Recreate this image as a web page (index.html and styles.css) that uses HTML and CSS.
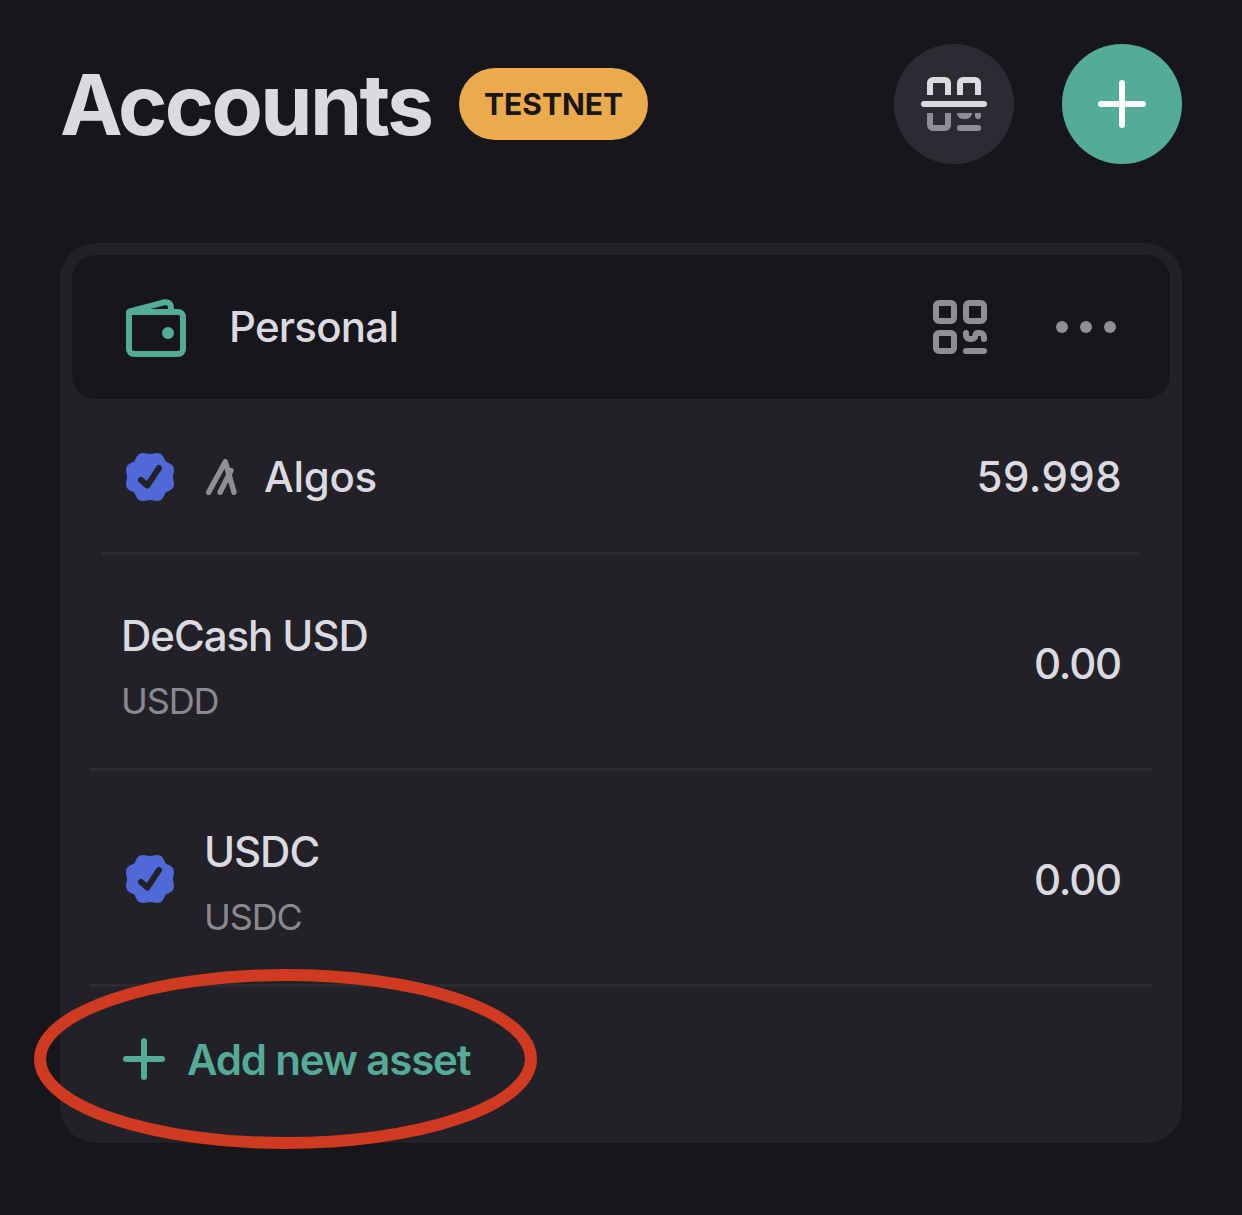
FILE: index.html
```html
<!DOCTYPE html>
<html lang="en">
<head>
<meta charset="utf-8">
<title>Accounts</title>
<link rel="stylesheet" href="styles.css">
</head>
<body>
<svg class="defs" aria-hidden="true">
  <symbol id="verified" viewBox="0 0 48 48">
    <path fill="#5069d8" d="M24 1C27 1 28 0 31 0C35.5 0 37 3 38.5 6C39.5 8.5 39.5 8.5 42 9.5C45 11 48 12.5 48 17C48 20 47 21 47 24C47 27 48 28 48 31C48 35.5 45 37 42 38.5C39.5 39.5 39.5 39.5 38.5 42C37 45 35.5 48 31 48C28 48 27 47 24 47C21 47 20 48 17 48C12.5 48 11 45 9.5 42C8.5 39.5 8.5 39.5 6 38.5C3 37 0 35.5 0 31C0 28 1 27 1 24C1 21 0 20 0 17C0 12.5 3 11 6 9.5C8.5 8.5 8.5 8.5 9.5 6C11 3 12.5 0 17 0C20 0 21 1 24 1Z"/>
    <path fill="none" stroke="#222127" stroke-width="6" stroke-linecap="round" stroke-linejoin="round" d="M15 27L21.3 32.6L33 15"/>
  </symbol>
</svg>
<main class="screen">
  <header class="topbar">
    <h1 class="title">Accounts</h1>
    <span class="badge"><span class="badge-text">TESTNET</span></span>
    <div class="actions">
      <button class="round scan" aria-label="Scan QR">
        <svg width="120" height="120" viewBox="0 0 120 120" fill="none" stroke-width="6">
          <path stroke="#dbdae0" d="M36 51V39a3 3 0 0 1 3-3h12a3 3 0 0 1 3 3v12M66 51V39a3 3 0 0 1 3-3h12a3 3 0 0 1 3 3v12"/>
          <path stroke="#dbdae0" stroke-linecap="round" d="M30 60h60"/>
          <path stroke="#8f8e98" d="M36 69v12a3 3 0 0 0 3 3h12a3 3 0 0 0 3-3V69"/>
          <path stroke="#8f8e98" stroke-linecap="round" d="M66 84h18"/>
          <path fill="#8f8e98" d="M63 69h15a6 6 0 0 1-6 6h-3a6 6 0 0 1-6-6zM81 69h6v3a3 3 0 0 1-6 0z"/>
        </svg>
      </button>
      <button class="round add" aria-label="Add account">
        <svg width="48" height="48" viewBox="0 0 48 48" stroke="#fff" stroke-width="6" stroke-linecap="round"><path d="M24 3v42M3 24h42"/></svg>
      </button>
    </div>
  </header>

  <section class="card">
    <div class="account">
      <svg class="wallet" width="60" height="58" viewBox="0 0 60 58" fill="none" stroke="#53ab98" stroke-width="6" stroke-linejoin="round">
        <path d="M3 13H52a5 5 0 0 1 5 5V50a5 5 0 0 1-5 5H8a5 5 0 0 1-5-5Z"/>
        <path d="M3 12.6L38 3.3Q45 2.3 45 9.5V12"/>
        <circle cx="42" cy="34" r="6" fill="#53ab98" stroke="none"/>
      </svg>
      <span class="name personal">Personal</span>
      <svg class="qr" width="54" height="54" viewBox="0 0 54 54" fill="none" stroke="#8f8e96" stroke-width="6">
        <rect x="3" y="3" width="18" height="18" rx="3"/>
        <rect x="33" y="3" width="18" height="18" rx="3"/>
        <rect x="3" y="33" width="18" height="18" rx="3"/>
        <path stroke-linecap="round" d="M33 33v2a4 4 0 0 0 4 4h1.5a4 4 0 0 0 4-4a2 2 0 0 1 2-2h2.5a4 4 0 0 1 4 4v2M33 51h18"/>
      </svg>
      <svg class="more" width="60" height="12" viewBox="0 0 60 12" fill="#8f8e96"><circle cx="6" cy="6" r="6"/><circle cx="30" cy="6" r="6"/><circle cx="54" cy="6" r="6"/></svg>
    </div>

    <div class="asset algos">
      <svg class="check" width="48" height="48"><use href="#verified"/></svg>
      <svg class="algo" width="31" height="36" viewBox="0 0 31 36" fill="none" stroke="#8f8e96" stroke-width="5.4" stroke-linecap="round" stroke-linejoin="round"><path d="M2.7 33.3L19.3 2.7L28 33.3M14.1 33.3L25 11.5"/></svg>
      <span class="name algos-name">Algos</span>
      <span class="amount long">59.998</span>
    </div>

    <div class="asset">
      <div class="names"><span class="name decash">DeCash USD</span><span class="unit">USDD</span></div>
      <span class="amount">0.00</span>
    </div>

    <div class="asset">
      <svg class="check" width="48" height="48"><use href="#verified"/></svg>
      <div class="names"><span class="name usdc">USDC</span><span class="unit">USDC</span></div>
      <span class="amount">0.00</span>
    </div>

    <div class="new-asset">
      <svg width="42" height="42" viewBox="0 0 42 42" stroke="#53ab98" stroke-width="6" stroke-linecap="round"><path d="M21 3v36M3 21h36"/></svg>
      <span class="new-text">Add new asset</span>
      <svg class="ring" width="504" height="182" viewBox="0 0 504 182" fill="none" stroke="#cf3a21" stroke-width="12"><ellipse cx="252.5" cy="91" rx="245.5" ry="84"/></svg>
    </div>
  </section>
</main>
</body>
</html>
```
FILE: styles.css
```css
* { box-sizing: border-box; }
body {
  margin: 0;
  background: #17161b;
  color: #dbdae0;
  font-family: Inter, "Liberation Sans", sans-serif;
}
.defs { position: absolute; width: 0; height: 0; }
svg { display: block; flex: none; }
.screen { height: 1215px; padding: 44px 60px 0; overflow: hidden; }
.topbar { display: flex; align-items: center; height: 120px; }
.title { margin: 0; padding-top: 2px; width: 399px; font-size: 84px; line-height: 120px; font-weight: 700; letter-spacing: -2.7px; white-space: nowrap; }
.badge {
  display: flex; align-items: center; justify-content: center;
  width: 189px; height: 72px; border-radius: 36px;
  background: #ebaa4b; color: #17161b;
  font-size: 30px; font-weight: 700;
}
.actions { display: flex; gap: 48px; margin-left: auto; }
.round {
  display: flex; align-items: center; justify-content: center;
  width: 120px; height: 120px; padding: 0; border: 0; border-radius: 50%;
}
.scan { background: #2c2b33; }
.add { background: #53ab98; }
.card { height: 900px; margin-top: 79px; padding: 12px; border-radius: 36px; background: #222127; }
.account {
  display: flex; align-items: center; height: 144px; padding: 0 54px;
  border-radius: 24px; background: #17161b;
}
.wallet { margin-top: 2px; }
.qr { margin-left: auto; margin-right: 69px; }
.name, .amount { font-size: 42px; line-height: 60px; font-weight: 500; white-space: nowrap; }
.amount { margin-left: auto; padding-top: 1px; font-weight: 450; letter-spacing: -1.2px; }
.amount.long { margin-right: -1px; padding-top: 3px; letter-spacing: 0.4px; }
.personal { margin-left: 43px; letter-spacing: -0.75px; }
.asset {
  display: flex; align-items: center; height: 216px;
  margin: 0 18px; padding: 3px 31px 0; border-bottom: 3px solid #2c2b31;
}
.asset.algos { height: 156px; margin: 0 30px; padding: 0 19px 0 24px; }
.asset > .check { margin-right: 30px; }
.asset:not(.algos) > .check { margin: 0 30px 0 5px; }
.algo { margin: 2px 27px 0 2px; }
.algos .check { margin-top: 3px; }
.algos-name { padding-top: 3px; letter-spacing: -0.3px; }
.names { display: flex; flex-direction: column; gap: 8px; padding-top: 7px; }
.decash, .usdc { letter-spacing: -1.05px; }
.unit { color: #8a8990; font-size: 36px; line-height: 54px; letter-spacing: -1.1px; }
.new-asset { position: relative; display: flex; align-items: center; height: 144px; padding-left: 51px; gap: 22px; color: #53ab98; }
.new-text { padding-top: 1px; font-size: 42px; line-height: 60px; font-weight: 600; letter-spacing: -1.17px; }
.ring { position: absolute; left: -39px; top: -19px; }
```
